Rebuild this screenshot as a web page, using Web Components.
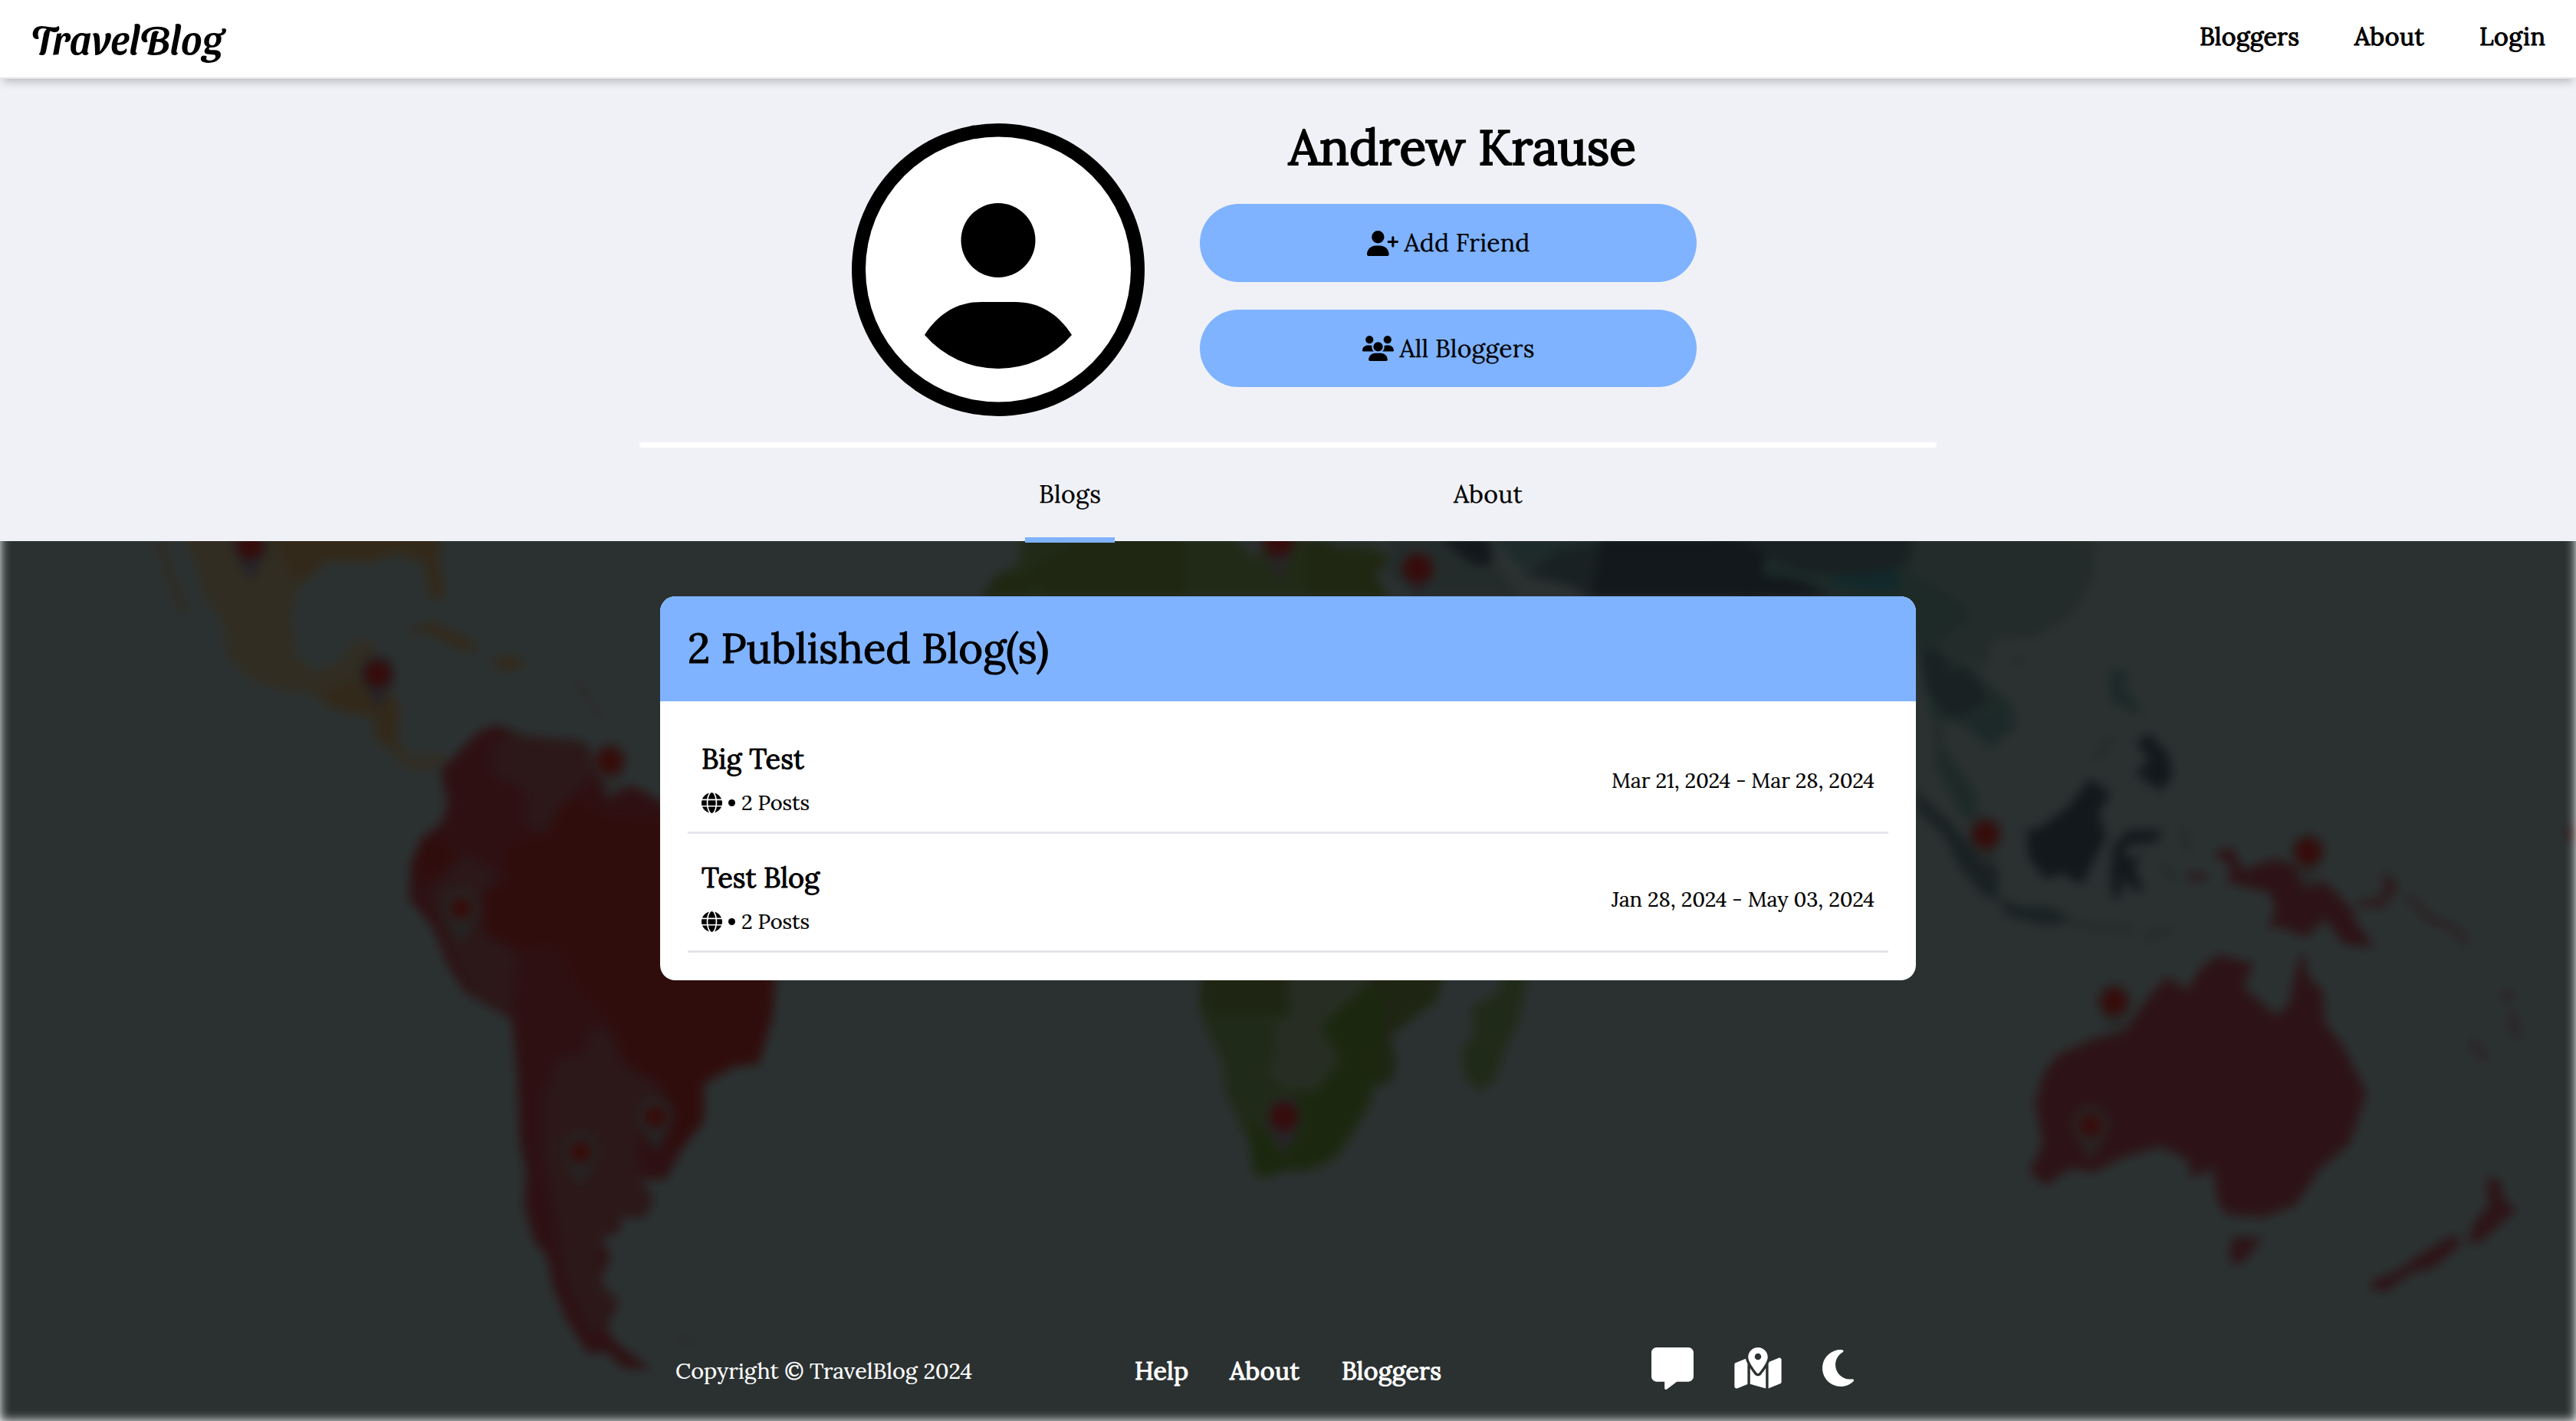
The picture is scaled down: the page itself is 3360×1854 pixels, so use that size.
<!DOCTYPE html>
<html lang="en">
<head>
<meta charset="utf-8">
<title>TravelBlog</title>
<style>
html,body{margin:0;height:100%;background:#fff;overflow:hidden}
body{font-family:"Lora","Liberation Serif",serif;color:#000}
</style>
</head>
<body>
<travel-app></travel-app>
<script>
const make=(tag,html,extra)=>customElements.define(tag,class extends HTMLElement{
  constructor(){super();this.attachShadow({mode:'open'}).innerHTML=html;}
  connectedCallback(){if(extra)extra(this,this.shadowRoot);}
});

/* A line of text whose letter spacing is tuned to a set width */
make('fit-text',`<style>:host{display:block;white-space:pre;flex:none}span{display:inline-block}</style><span><slot></slot></span>`,(el,root)=>{
  const w=+el.getAttribute('w'),s=root.querySelector('span');
  el.style.width=w+'px';
  const n=el.textContent.length;
  s.style.letterSpacing='0px';
  const cur=s.getBoundingClientRect().width;
  s.style.letterSpacing=((w-cur)/(n-1))+'px';
});

const ICONS={
 userplus:['0 0 640 512','M96 128a128 128 0 1 1 256 0A128 128 0 1 1 96 128zM0 482.3C0 383.8 79.8 304 178.3 304h91.4C368.2 304 448 383.8 448 482.3c0 16.4-13.3 29.7-29.7 29.7H29.7C13.3 512 0 498.7 0 482.3zM504 312V248H440c-13.3 0-24-10.7-24-24s10.7-24 24-24h64V136c0-13.3 10.7-24 24-24s24 10.7 24 24v64h64c13.3 0 24 10.7 24 24s-10.7 24-24 24H552v64c0 13.3-10.7 24-24 24s-24-10.7-24-24z'],
 users:['0 0 640 512','M144 0a80 80 0 1 1 0 160A80 80 0 1 1 144 0zM512 0a80 80 0 1 1 0 160A80 80 0 1 1 512 0zM0 298.7C0 239.8 47.8 192 106.7 192h42.7c15.9 0 31 3.5 44.6 9.7c-1.3 7.2-1.9 14.7-1.9 22.3c0 38.2 16.8 72.5 43.3 96c-.2 0-.4 0-.7 0H21.3C9.6 320 0 310.4 0 298.7zM405.3 320c-.2 0-.4 0-.7 0c26.6-23.5 43.3-57.8 43.3-96c0-7.6-.7-15-1.9-22.3c13.6-6.3 28.7-9.7 44.6-9.7h42.7C592.2 192 640 239.8 640 298.7c0 11.8-9.6 21.3-21.3 21.3H405.3zM224 224a96 96 0 1 1 192 0 96 96 0 1 1 -192 0zM128 485.3C128 411.7 187.7 352 261.3 352H378.7C452.3 352 512 411.7 512 485.3c0 14.7-11.9 26.7-26.7 26.7H154.7c-14.7 0-26.7-11.9-26.7-26.7z'],
 globe:['0 0 512 512','M352 256c0 22.2-1.2 43.6-3.3 64H163.3c-2.2-20.4-3.3-41.8-3.3-64s1.2-43.6 3.3-64H348.7c2.2 20.4 3.3 41.8 3.3 64zm28.8-64H503.9c5.3 20.5 8.1 41.9 8.1 64s-2.8 43.5-8.1 64H380.8c2.1-20.6 3.2-42 3.2-64s-1.1-43.4-3.2-64zm112.6-32H376.7c-10-63.9-29.8-117.4-55.3-151.6c78.3 20.7 142 77.5 171.9 151.6zm-149.1 0H167.7c6.1-36.4 15.5-68.6 27-94.7c10.5-23.6 22.2-40.7 33.5-51.5C239.4 3.2 248.7 0 256 0s16.6 3.2 27.8 13.8c11.3 10.8 23 27.9 33.5 51.5c11.6 26 20.9 58.2 27 94.7zm-209 0H18.6C48.6 85.9 112.2 29.1 190.6 8.4C165.1 42.6 145.3 96.1 135.3 160zM8.1 192H131.2c-2.1 20.6-3.2 42-3.2 64s1.1 43.4 3.2 64H8.1C2.8 299.5 0 278.1 0 256s2.8-43.5 8.1-64zM194.7 446.6c-11.6-26-20.9-58.2-27-94.6H344.3c-6.1 36.4-15.5 68.6-27 94.6c-10.5 23.6-22.2 40.7-33.5 51.5C272.6 508.8 263.3 512 256 512s-16.6-3.2-27.8-13.8c-11.3-10.8-23-27.9-33.5-51.5zM135.3 352c10 63.9 29.8 117.4 55.3 151.6C112.2 482.9 48.6 426.1 18.6 352H135.3zm358.1 0c-30 74.1-93.6 130.9-171.9 151.6c25.5-34.2 45.2-87.7 55.3-151.6H493.4z'],
 message:['0 0 512 512','M64 0C28.7 0 0 28.7 0 64V352c0 35.3 28.7 64 64 64h96v80c0 6.1 3.4 11.6 8.8 14.3s11.9 2.1 16.8-1.5L309.3 416H448c35.3 0 64-28.7 64-64V64c0-35.3-28.7-64-64-64H64z'],
 map:['0 0 576 508','M408 120c0 54.6-73.1 151.9-105.2 192c-7.7 9.6-22 9.6-29.6 0C241.1 271.9 168 174.6 168 120C168 53.7 221.7 0 288 0s120 53.7 120 120zm8 80.4c3.5-6.9 6.7-13.8 9.6-20.6c.5-1.2 1-2.5 1.5-3.7l116-46.4C558.9 123.4 576 135 576 152V422.8c0 9.8-6 18.6-15.1 22.3L416 503V200.4zM137.6 138.3c2.4 14.1 7.2 28.3 12.8 41.5c2.9 6.8 6.1 13.7 9.6 20.6V451.8L32.9 502.7C17.1 509 0 497.4 0 480.4V209.6c0-9.8 6-18.6 15.1-22.3l122.6-49zM327.8 332c13.9-17.4 35.7-45.7 56.2-77V504.3L192 449.4V255c20.5 31.3 42.3 59.6 56.2 77c20.5 25.6 59.1 25.6 79.6 0zM288 152a40 40 0 1 0 0-80 40 40 0 1 0 0 80z'],
 moon:['0 32 384 448','M223.5 32C100 32 0 132.3 0 256S100 480 223.5 480c60.6 0 115.5-24.2 155.8-63.4c5-4.9 6.3-12.5 3.1-18.7s-10.1-9.7-17-8.5c-9.8 1.7-19.8 2.6-30.1 2.6c-96.9 0-175.5-78.8-175.5-176c0-65.8 36-123.1 89.3-153.3c6.1-3.5 9.2-10.5 7.7-17.3s-7.3-11.9-14.3-12.5c-6.3-.5-12.6-.8-19-.8z']
};
make('t-icon',`<style>:host{display:block;flex:none}svg{display:block;width:100%;height:100%;fill:currentColor}</style><svg><path/></svg>`,(el,root)=>{
  const i=ICONS[el.getAttribute('name')],s=root.querySelector('svg');
  s.setAttribute('viewBox',i[0]);root.querySelector('path').setAttribute('d',i[1]);
  el.style.width=el.getAttribute('w')+'px';el.style.height=el.getAttribute('h')+'px';
});

make('user-avatar',`<style>:host{display:block;width:382px;height:382px;flex:none}svg{display:block}</style>
<svg width="382" height="382" viewBox="0 0 382 382"><circle cx="191" cy="191" r="191"/><circle cx="191" cy="190.5" r="173" fill="#fff"/><circle cx="191" cy="152.500" r="48.500"/><path d="M95 276C113 248 138 233 169 233H213C244 233 269 248 287 276A126.700 126.700 0 0 1 95 276Z"/></svg>`);

make('site-header',`<style>
:host{display:flex;justify-content:space-between;box-sizing:border-box;height:103px;background:#fff;border-bottom:2px solid #e4e4ea;padding:0 40px 0 40px;position:relative;z-index:2;box-shadow:0 8px 10px -4px rgba(0,0,0,.22)}
.logo{font:500 52px/60px "Sansita Swashed","Liberation Serif",serif;padding-top:19px}
nav{display:flex;padding-top:28px;font-size:32px;line-height:40px;-webkit-text-stroke:1.1px #000}
</style>
<fit-text class="logo" w="251">TravelBlog</fit-text>
<nav><fit-text w="130">Bloggers</fit-text><fit-text w="91" style="margin-left:72px">About</fit-text><fit-text w="86" style="margin-left:72px">Login</fit-text></nav>`);

make('pill-button',`<style>:host{display:flex;align-items:center;justify-content:center;gap:8px;background:#7fb3ff;border-radius:51px;font-size:32px;line-height:40px;width:648px;-webkit-text-stroke:.25px #000}</style><slot></slot>`);

make('profile-hero',`<style>
:host{display:block;height:603px;background:#f0f1f6;position:relative;z-index:1}
.row{display:flex;height:474px;box-sizing:border-box;padding:48px 0 0 1111px}
user-avatar{margin:10px 72px 0 0}
.name{height:115px;font-size:64px;line-height:80px;padding-top:1px;box-sizing:border-box;margin-left:116px;-webkit-text-stroke:2.2px #000}
hr{margin:0 auto;border:0;background:#fff;width:1692px;height:7px;border-radius:4px}
.tabs{display:flex;gap:424px;margin:0 834px;padding-left:503px;height:124px;font-size:32px;line-height:40px;-webkit-text-stroke:.25px #000}
.tab{box-sizing:border-box;height:124px;padding:41px 18px 0;border-bottom:7px solid transparent}
.on{border-color:#7fb3ff}
</style>
<div class="row"><user-avatar></user-avatar><div>
<fit-text class="name" w="453">Andrew Krause</fit-text>
<pill-button style="height:102px"><t-icon name="userplus" w="41" h="33"></t-icon><fit-text w="164">Add Friend</fit-text></pill-button>
<pill-button style="height:101px;margin-top:36px"><t-icon name="users" w="41" h="33"></t-icon><fit-text w="176">All Bloggers</fit-text></pill-button>
</div></div><hr>
<div class="tabs"><div class="tab on"><fit-text w="81">Blogs</fit-text></div><div class="tab"><fit-text w="90">About</fit-text></div></div>`);

make('blog-row',`<style>
:host{display:flex;justify-content:space-between;box-sizing:border-box;height:155px;padding:34px 18px 0 18px;border-bottom:3px solid #e4e4ea;-webkit-text-stroke:.2px #000}
::slotted([slot=title]){font-size:36px;line-height:46px;margin-bottom:16px;-webkit-text-stroke:1px #000}
.meta{display:flex;align-items:center;font-size:27.2px;line-height:36px}
.dot{width:9px;height:9px;border-radius:50%;background:#000;margin:0 8px 0 8px}
::slotted([slot=date]){font-size:27.2px;line-height:36px;margin-top:33px}
</style>
<div><slot name="title"></slot><div class="meta"><t-icon name="globe" w="27" h="27"></t-icon><i class="dot"></i><slot name="posts"></slot></div></div><slot name="date"></slot>`);

make('blog-card',`<style>
:host{display:block;width:1638px;height:501px;margin:72px 0 0 861px;background:#fff;border-radius:20px;overflow:hidden}
header{height:137px;background:#7fb3ff;box-sizing:border-box;padding:32px 36px;font-size:54.4px;line-height:70px;-webkit-text-stroke:1.2px #000}
.list{padding:18px 36px 0}
</style>
<header><fit-text w="471">2 Published Blog(s)</fit-text></header>
<div class="list">
<blog-row><fit-text slot="title" w="134">Big Test</fit-text><fit-text slot="posts" w="89">2 Posts</fit-text><fit-text slot="date" w="343">Mar 21, 2024 - Mar 28, 2024</fit-text></blog-row>
<blog-row><fit-text slot="title" w="154">Test Blog</fit-text><fit-text slot="posts" w="89">2 Posts</fit-text><fit-text slot="date" w="343">Jan 28, 2024 - May 03, 2024</fit-text></blog-row>
</div>`);

make('site-footer',`<style>
:host{display:flex;align-items:center;height:130px;margin-top:auto;padding-left:881px;color:#fff}
.c{font-size:28.8px;line-height:36px;-webkit-text-stroke:.2px #fff}
nav,.icons{display:flex;align-items:center}
nav{margin-left:212px;font-size:32px;line-height:40px;-webkit-text-stroke:1.1px #fff}
.icons{margin:0 0 8px 274px;gap:53px}
</style>
<fit-text class="c" w="387">Copyright © TravelBlog 2024</fit-text>
<nav><fit-text w="70">Help</fit-text><fit-text w="91" style="margin-left:54px">About</fit-text><fit-text w="130" style="margin-left:55px">Bloggers</fit-text></nav>
<div class="icons"><t-icon name="message" w="55" h="55"></t-icon><t-icon name="map" w="62" h="54"></t-icon><t-icon name="moon" w="41" h="48"></t-icon></div>`);

const pin=(x,y,t,r=24)=>`<g transform="translate(${x} ${y})"><path d="M0 62L-28 14A32 32 0 1 1 28 14Z" fill="${t||'#252525'}"/><circle r="${r}" fill="#360c0a"/></g>`;
make('world-map',`<style>
:host{display:block;position:absolute;inset:0;filter:blur(7px)}
svg{display:block}
</style>
<svg width="3360" height="1854" viewBox="0 0 3360 1854"><rect width="3360" height="1854" fill="#2b3131"/>
<g transform="translate(0 690) scale(.7143 .7423)">
<path fill="#312d22" d="M340 0L340 20L375 120L410 170L415 225L460 265L520 285L570 290L600 315L680 330L700 380L735 415L770 425L825 410L800 395L750 400L725 370L725 310L715 280L660 270L690 200L650 195L620 235L575 250L540 225L530 150L550 90L590 55L650 60L720 45L770 60L785 125L815 120L800 60L810 0Z"/>
<path fill="none" stroke="#2f2c23" stroke-width="16" d="M290 10L310 80L340 150"/>
<path fill="#33291a" d="M490 0L545 100L600 55L680 58L730 40L775 55L790 122L812 118L800 50L810 0ZM735 180L790 165L850 190L880 220L840 210L790 185ZM895 230L930 222L965 238L920 250ZM585 290L660 260L730 310L725 380L690 375L680 330L620 320Z"/>
<path fill="#2e1012" d="M905 345L870 360L840 390L805 425L818 480L808 515L770 545L750 590L748 650L790 700L820 770L850 815L935 860L945 960L950 1080L962 1130L958 1190L975 1250L1000 1280L1010 1330L1035 1390L1075 1450L1105 1445L1140 1475L1190 1478L1165 1460L1130 1435L1105 1405L1130 1360L1095 1325L1115 1275L1095 1250L1135 1230L1130 1210L1175 1210L1195 1180L1170 1140L1215 1145L1245 1090L1285 1040L1285 975L1340 945L1385 940L1410 860L1415 795L1400 640L1210 480L1150 450L1110 475L1070 375L1030 370L985 380L935 355Z"/>
<path fill="#300d0d" d="M1050 470L1100 500L1210 510L1400 640L1415 795L1410 860L1385 940L1340 945L1285 975L1285 1040L1245 1090L1225 1080L1225 1000L1140 940L1125 880L1050 800L1020 735L945 740L880 710L885 640L925 620L925 550L1000 535L1020 490ZM770 545L810 540L835 580L780 620L755 590Z"/>
<path fill="#2c1819" d="M900 380L930 360L1070 375L1090 430L1020 490L1000 535L960 520L960 460L900 430ZM780 640L850 570L915 610L880 640L885 710L945 745L935 850L860 815L820 740ZM1110 880L1140 940L1210 980L1165 1080L1170 1140L1195 1180L1170 1208L1130 1210L1095 1260L1095 1330L1125 1360L1100 1400L1080 1420L1030 1320L1010 1200L990 1100L990 1000L1020 930L1070 920L1075 880Z"/>
<path fill="none" stroke="#2d2928" stroke-width="8" d="M1050 265L1080 305L1100 340M1230 1420L1270 1430"/>
${pin(457,30,'#242328')}${pin(690,255,'#242328')}${pin(1114,408,'#292928')}${pin(842,667,'',20)}${pin(1197,1033,'',20)}${pin(1060,1095,'',20)}
</g>
<g transform="translate(1200 700) scale(.829 .3333)">
<path fill="#212a17" d="M160 0L155 110L120 150L95 240L740 240L715 150L740 90L720 40L660 30L600 0Z"/>
<path fill="#1f2611" d="M240 40L170 140L205 240L415 240L415 0L255 0ZM610 0L660 60L740 90L715 150L735 240L610 240ZM180 170L120 150L95 240L170 240Z"/>
<path fill="#2b2f30" d="M490 0L530 90L545 0ZM640 0L660 50L690 0Z"/>
<path fill="#242c2b" d="M740 0L735 150L780 240L950 240L910 120L880 90L820 0Z"/>
<path fill="#12181b" d="M815 0L870 110L900 110L900 50L890 0ZM1070 0L1055 240L1430 240L1390 180L1330 160L1320 70L1280 0Z"/>
<path fill="#1d2b2a" d="M900 0L950 130L1000 60L1070 30L1070 0ZM1320 70L1325 160L1420 200L1568 240L1568 80L1500 90L1400 140Z"/>
<path fill="#192122" d="M1000 60L1070 30L1055 240L1020 190L950 150ZM1280 0L1350 100L1400 150L1490 130L1550 60L1550 0Z"/>
<path fill="#11292d" d="M1430 180L1510 90L1545 180L1500 235L1430 220Z"/>
<ellipse cx="1303" cy="225" rx="26" ry="30" fill="#2a1f20"/>
<path fill="#28232a" d="M545 50L565 170L585 50ZM765 160L785 240L800 160Z"/>
<ellipse cx="564" cy="20" rx="24" ry="56" fill="#360c0b"/><ellipse cx="783" cy="125" rx="24" ry="58" fill="#360c0b"/>
</g>
<g transform="translate(1120 1260) scale(.7143 .3788)">
<path fill="#202a18" d="M630 0L620 140L640 240L665 330L670 440L700 560L718 620L720 710L740 730L780 705L820 705L865 670L900 590L915 530L935 480L938 420L970 400L982 340L970 240L1000 190L1055 120L1070 0Z"/>
<path fill="#1e2512" d="M630 0L625 130L650 165L785 165L780 0ZM960 0L920 60L960 150L940 320L945 415L975 390L982 330L970 240L1055 120L1070 0Z"/>
<path fill="#272d23" d="M780 0L790 165L760 190L760 300L745 380L790 430L835 430L880 320L845 210L930 60L960 0Z"/>
<path fill="#1b280f" d="M710 530L750 590L775 660L800 560L790 430L835 440L880 330L945 320L938 440L915 530L865 670L820 705L780 705L740 730L720 710ZM845 210L930 60L960 150L940 320L880 330Z"/>
<path fill="#202a18" d="M1180 30L1165 100L1120 140L1125 230L1100 300L1108 390L1135 430L1160 400L1180 290L1205 190L1222 30Z"/>
<path fill="#28232a" d="M745 540L777 650L808 540L800 460L755 460Z"/><ellipse cx="777" cy="520" rx="25" ry="48" fill="#360c0b"/>
</g>
<g transform="translate(2240 690) scale(.7143 .7423)">
<path fill="#232c2a" d="M300 0L300 140L400 200L490 250L500 195L580 190L650 150L685 90L690 20Z"/>
<path fill="#1c2a28" d="M60 60L110 60L210 100L350 70L350 200L200 115Z"/>
<path fill="#1e2a28" d="M350 80L400 100L470 150L400 200L400 230L430 220L480 260L540 310L545 350L500 385L455 350L430 340L410 330L410 380L470 460L480 510L450 510L400 420L395 340L340 120Z"/>
<path fill="#12181b" d="M0 0L50 20L90 45L80 80L150 90L210 120L0 120Z"/>
<path fill="#192122" d="M50 0L360 0L350 60L300 85L200 80L140 65L80 40ZM375 215L410 210L425 255L460 245L495 300L450 330L420 330L380 280ZM362 460L420 510L465 560L510 590L515 650L485 645L440 590L415 540L362 490ZM510 650L560 665L610 665L650 690L600 697L530 680Z"/>
<path fill="#11292c" d="M210 90L330 70L325 105L280 110Z"/>
<path fill="#1c2928" d="M715 250L745 245L745 280L780 330L720 305ZM460 340L525 320L525 360L495 385Z"/>
<path fill="none" stroke="#232b2b" stroke-width="12" d="M720 370L690 405M650 695L760 705M780 720L830 700M850 525L860 570M810 590L840 620M542 232L562 232"/>
<path fill="#12181b" d="M565 530L590 525L640 490L680 440L718 465L695 500L710 540L665 625L630 605L600 615L570 580ZM765 375L790 360L825 400L830 435L810 460L765 430L790 405ZM720 600L725 555L750 530L815 530L800 550L745 555L745 580L775 575L760 595L780 640L755 630L740 610L735 650L720 645Z"/>
<path fill="#2d1317" d="M905 570L940 560L960 600L1015 580L1055 590L1070 630L1110 620L1160 670L1165 690L1200 735L1145 730L1110 685L1075 718L1030 700L1005 700L1020 670L1010 640L930 620L940 595ZM860 605L895 608L890 618L860 618Z"/>
<path fill="#2d1b1e" d="M1165 655L1215 645L1215 600L1245 625L1220 665L1175 665Z"/>
<path fill="#2d1317" d="M1070 740L1055 780L1045 835L1020 855L960 805L980 765L915 748L880 775L860 810L820 788L790 820L740 885L690 895L620 925L595 960L580 1010L595 1080L570 1130L600 1155L640 1125L690 1130L740 1105L810 1085L860 1110L865 1140L905 1125L915 1185L930 1205L995 1210L1055 1190L1100 1125L1155 1080L1185 990L1140 905L1110 870L1105 810L1080 790ZM940 1245L995 1245L960 1290L935 1290ZM1190 1335L1200 1320L1240 1305L1270 1285L1345 1240L1360 1255L1305 1300L1270 1305L1220 1340ZM1370 1255L1385 1215L1410 1190L1405 1140L1430 1145L1435 1180L1460 1195L1420 1230L1390 1255Z"/>
<path fill="none" stroke="#2c2023" stroke-width="12" d="M1260 645L1300 685L1345 700L1370 730M1430 820L1455 822M1375 900L1405 932M1450 850L1460 895"/>
${pin(490,537,'#272828')}${pin(1079,567,'#272828')}${pin(725,831,'#272828')}${pin(681,1049,'#292424',20)}
<circle cx="1562" cy="535" r="12" fill="#331719"/>
</g></svg>`);

make('travel-app',`<style>:host{display:flex;flex-direction:column;position:relative;height:1854px;width:3360px;overflow:hidden}site-header,profile-hero{flex:none}blog-card,site-footer{position:relative;flex:none}</style>
<world-map></world-map><site-header></site-header><profile-hero></profile-hero><blog-card></blog-card><site-footer></site-footer>`);
</script>
</body>
</html>
